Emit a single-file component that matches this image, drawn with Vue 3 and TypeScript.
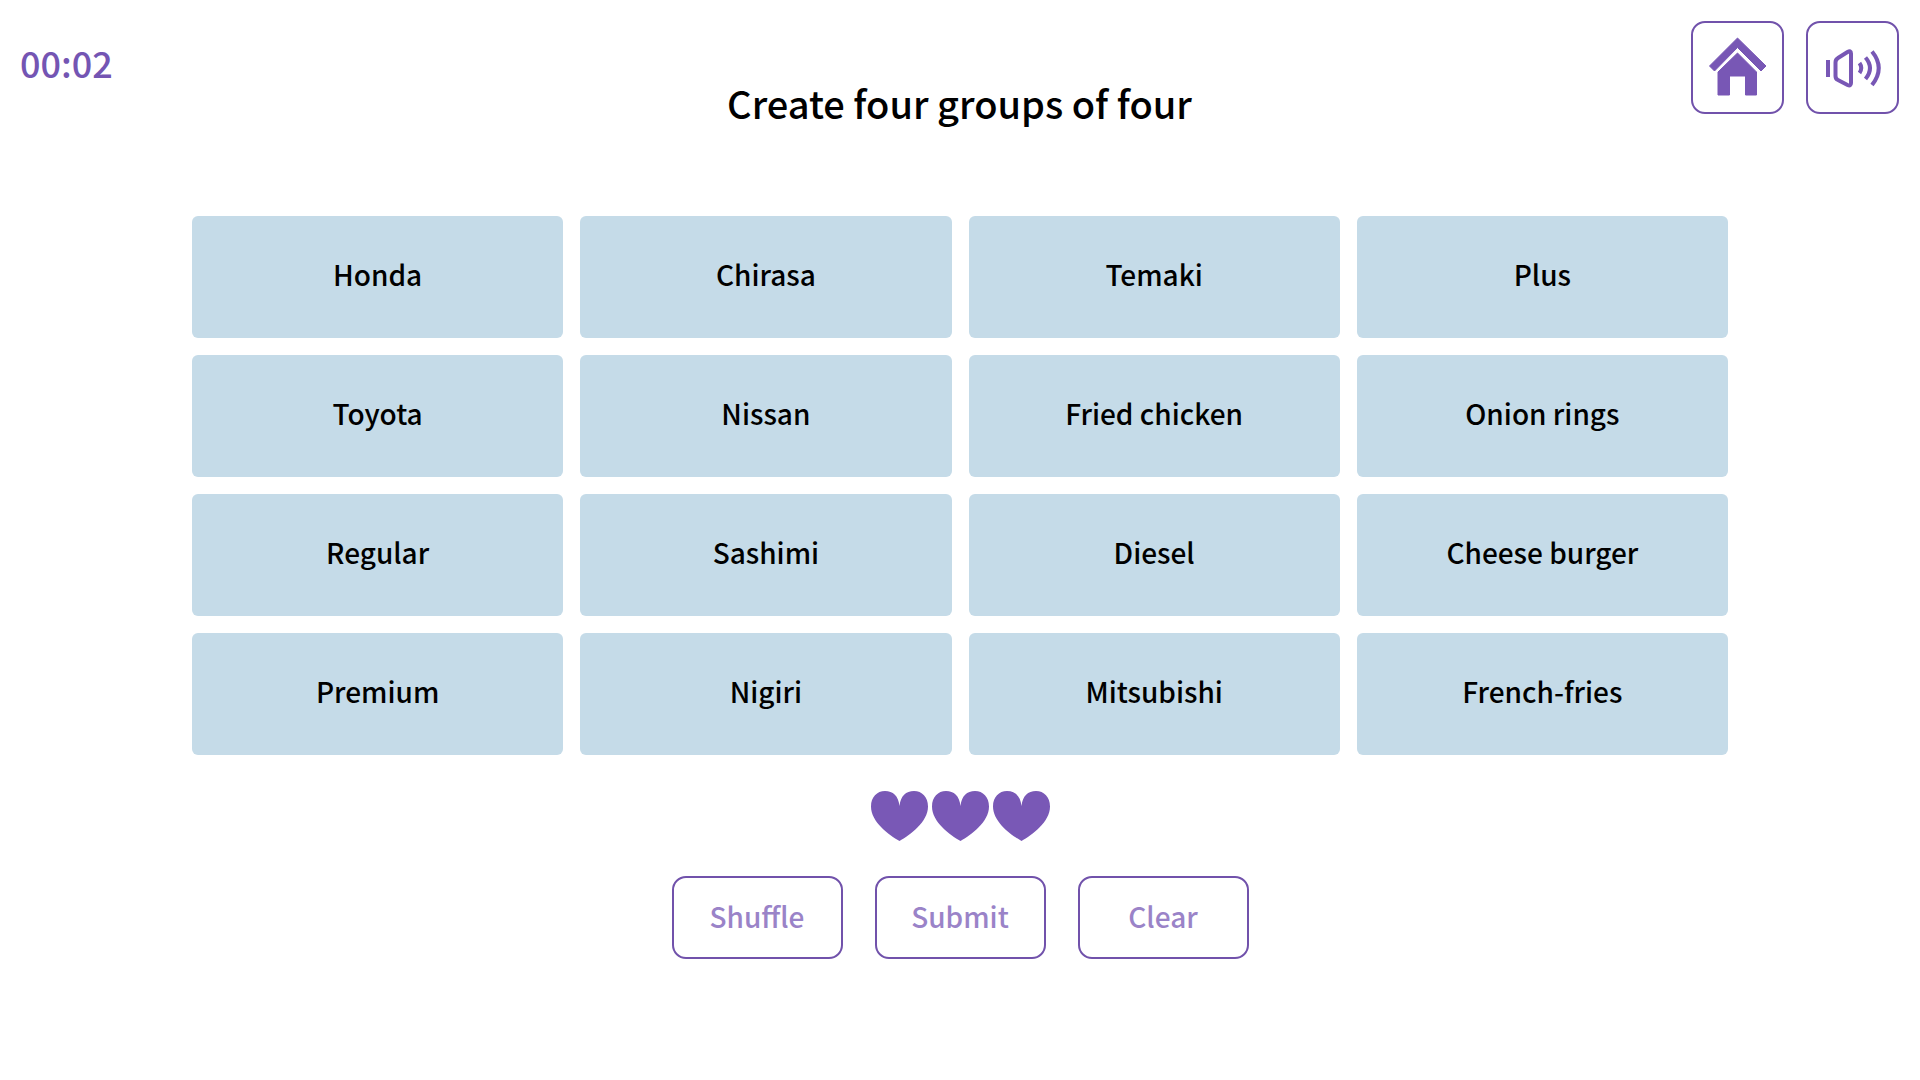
<script setup lang="ts">
import { computed, ref } from 'vue'

const seconds = ref(2)
const lives = ref(3)
const muted = ref(false)
const selected = ref<string[]>([])
const words = ref<string[]>([
  'Honda', 'Chirasa', 'Temaki', 'Plus',
  'Toyota', 'Nissan', 'Fried chicken', 'Onion rings',
  'Regular', 'Sashimi', 'Diesel', 'Cheese burger',
  'Premium', 'Nigiri', 'Mitsubishi', 'French-fries',
])

const clock = computed(() => {
  const pad = (n: number) => String(n).padStart(2, '0')
  return `${pad(Math.floor(seconds.value / 60))}:${pad(seconds.value % 60)}`
})

function toggle(word: string) {
  if (selected.value.includes(word)) {
    selected.value = selected.value.filter((w) => w !== word)
  } else if (selected.value.length < 4) {
    selected.value = [...selected.value, word]
  }
}

function shuffle() {
  const next = [...words.value]
  for (let i = next.length - 1; i > 0; i--) {
    const j = Math.floor(Math.random() * (i + 1))
    ;[next[i], next[j]] = [next[j], next[i]]
  }
  words.value = next
}

function clear() {
  selected.value = []
}
</script>

<template>
  <div class="game">
    <header class="top">
      <time class="clock">{{ clock }}</time>
      <h1 class="title">Create four groups of four</h1>
      <nav class="tools">
        <button class="tool" type="button" aria-label="Home">
          <svg viewBox="0 0 93 93" aria-hidden="true" fill="currentColor" stroke="currentColor" stroke-width="1" stroke-linejoin="round">
            <path d="M46.500 17 L75 45 L70 50 L46.500 26.500 L23.500 50 L18.500 45 Z" />
            <path d="M46.500 32 L65.500 51 V74 H54.500 V55 H38.500 V74 H27 V51 Z" />
          </svg>
        </button>
        <button class="tool" type="button" aria-label="Sound" :aria-pressed="muted" @click="muted = !muted">
          <svg viewBox="0 0 93 93" aria-hidden="true" fill="none" stroke="currentColor" stroke-width="4">
            <path d="M22 39 V56" />
            <path d="M29.500 41.500 Q29.500 38.500 32 37 L41.500 31 Q45 29 45 32.500 V62 Q45 65.500 41.500 64 L32 59 Q29.500 58 29.500 55 Z" />
            <path d="M53.500 42 Q57 47 53.500 52" />
            <path d="M59.500 36.500 Q68.500 47 59.500 58" />
            <path d="M66 30.500 Q79.500 47 66 64" />
          </svg>
        </button>
      </nav>
    </header>

    <main class="board">
      <button
        v-for="word in words"
        :key="word"
        class="card"
        :class="{ picked: selected.includes(word) }"
        type="button"
        @click="toggle(word)"
      >
        {{ word }}
      </button>
    </main>

    <div class="lives" role="img" :aria-label="`${lives} lives left`">
      <svg v-for="n in lives" :key="n" class="heart" viewBox="0 0 57 50" aria-hidden="true">
        <path
          d="M28.500 50 C18 44 0 31 0 15.500 C0 6 6 0 14 0 C22 0 27.500 5 28.500 15 C29.500 5 35 0 43 0 C51 0 57 6 57 15.500 C57 31 39 44 28.500 50 Z"
          fill="currentColor"
        />
      </svg>
    </div>

    <footer class="actions">
      <button class="action" type="button" @click="shuffle">Shuffle</button>
      <button class="action" type="button">Submit</button>
      <button class="action" type="button" @click="clear">Clear</button>
    </footer>
  </div>
</template>

<style>
body {
  background: #fff;
}
</style>

<style scoped>
.game {
  font-family: "Noto Sans CJK SC", "Noto Sans", sans-serif;
  font-weight: 500;
  color: #000;
}

button {
  box-sizing: border-box;
  margin: 0;
  padding: 0;
  font: inherit;
  cursor: pointer;
}

.top {
  display: grid;
  grid-template-columns: 1fr auto 1fr;
  align-items: start;
  height: 216px;
  padding: 21px 21px 0 20px;
  box-sizing: border-box;
}

.clock {
  margin-top: 17px;
  font-size: 36px;
  line-height: 48px;
  color: #7455b3;
}

.title {
  margin: 54px 0 0;
  font-size: 38px;
  font-weight: 500;
  line-height: 56px;
}

.tools {
  display: flex;
  justify-content: flex-end;
  gap: 22px;
}

.tool {
  width: 93px;
  height: 93px;
  border: 2px solid #7152ab;
  border-radius: 14px;
  background: #fff;
  color: #7857b5;
}

.tool svg {
  display: block;
  width: 93px;
  height: 93px;
  margin: -2px;
}

.board {
  display: grid;
  grid-template-columns: repeat(4, 1fr);
  grid-auto-rows: 122px;
  gap: 17px;
  width: 80%;
  margin: 0 auto;
}

.card {
  border: 0;
  border-radius: 6px;
  background: #c5dbe8;
  color: #000;
  font-size: 28px;
  line-height: 40px;
  padding-bottom: 6px;
}

.card.picked {
  background: #9fc3d8;
}

.lives {
  display: flex;
  justify-content: center;
  gap: 4px;
  margin-top: 36px;
  color: #7958b6;
}

.heart {
  width: 57px;
  height: 50px;
}

.actions {
  display: flex;
  justify-content: center;
  gap: 32px;
  margin-top: 35px;
}

.action {
  width: 171px;
  height: 83px;
  border: 2px solid #7152ab;
  border-radius: 14px;
  background: #fff;
  color: #9a83c8;
  font-size: 28px;
  line-height: 40px;
  padding-bottom: 4px;
}
</style>
